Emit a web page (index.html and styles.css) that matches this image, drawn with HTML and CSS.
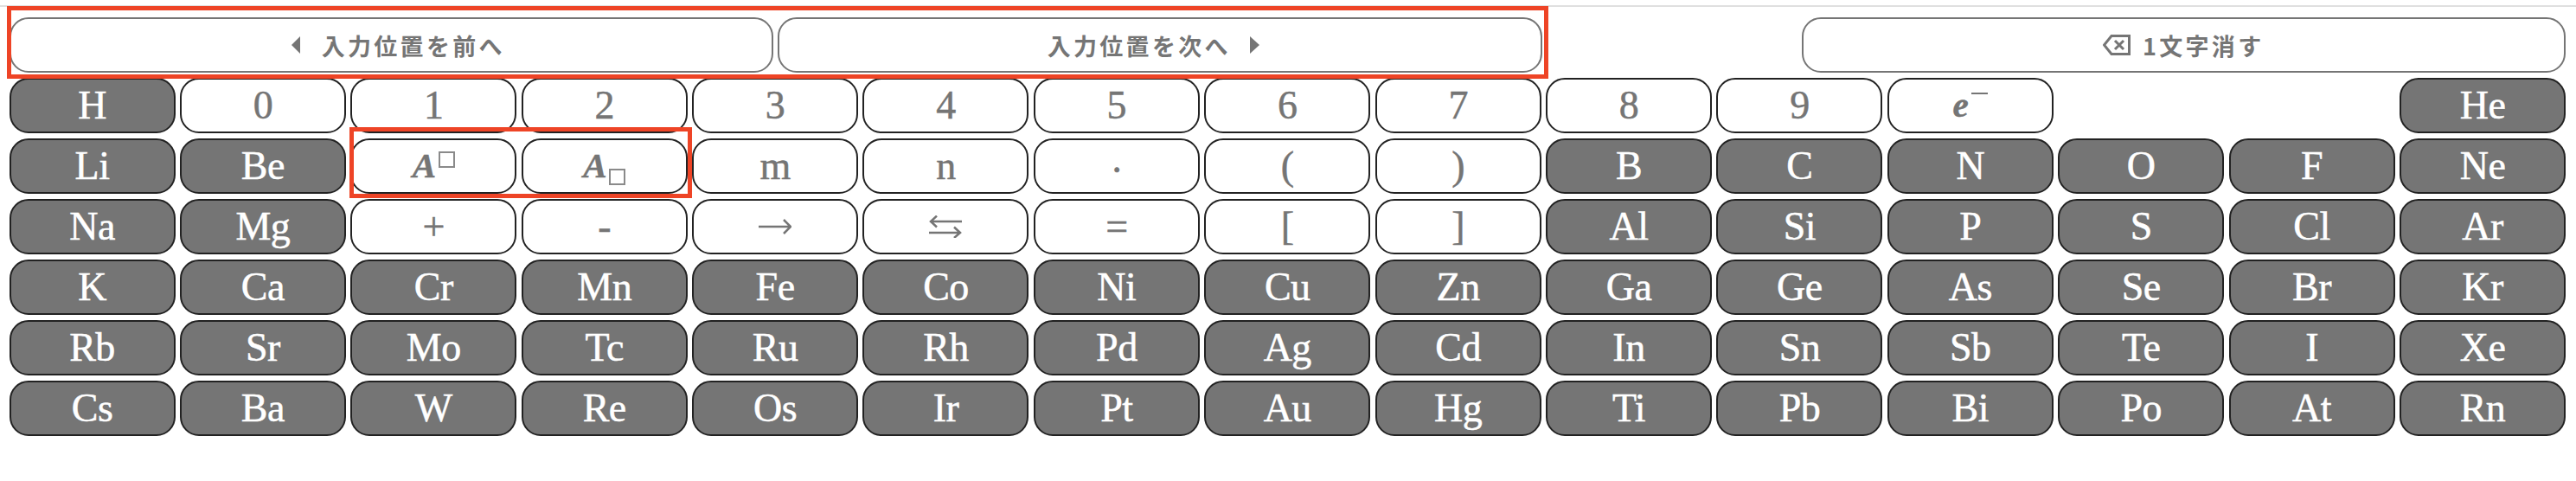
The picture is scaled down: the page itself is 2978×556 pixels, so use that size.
FILE: index.html
```html
<!DOCTYPE html>
<html lang="ja">
<head>
    <meta charset="UTF-8">
    <meta name="viewport" content="width=device-width, initial-scale=1.0">
    <title>化学式キーボード</title>
    <link rel="stylesheet" href="styles.css">
</head>
<body>
    <div class="keyboard">
        <div class="cursor-row">
            <button class="cursor-btn">
                <svg class="tri" width="51" height="20" viewBox="0 0 51 20"><path d="M26 0V20L16 10Z"/></svg>
                <span>入力位置を前へ</span>
            </button>
            <button class="cursor-btn">
                <span>入力位置を次へ</span>
                <svg class="tri" width="48" height="20" viewBox="0 0 48 20"><path d="M22 0V20L33 10Z"/></svg>
            </button>
            <button class="cursor-btn delete-btn">
                <svg class="back-icon" width="32" height="24" viewBox="0 0 32 24"><path d="M10 1.5H30.5V22.5H10L1.5 12Z M14 7L24 17 M24 7L14 17"/></svg>
                <span>1文字消す</span>
            </button>
        </div>
        <div class="keys">
            <button class="key elem">H</button>
            <button class="key">0</button>
            <button class="key">1</button>
            <button class="key">2</button>
            <button class="key">3</button>
            <button class="key">4</button>
            <button class="key">5</button>
            <button class="key">6</button>
            <button class="key">7</button>
            <button class="key">8</button>
            <button class="key">9</button>
            <button class="key"><i class="math">e</i><span class="minus"></span></button>
            <div></div>
            <div></div>
            <button class="key elem">He</button>

            <button class="key elem">Li</button>
            <button class="key elem">Be</button>
            <button class="key"><i class="math">A</i><span class="box box-sup"></span></button>
            <button class="key"><i class="math">A</i><span class="box box-sub"></span></button>
            <button class="key">m</button>
            <button class="key">n</button>
            <button class="key dot">·</button>
            <button class="key">(</button>
            <button class="key">)</button>
            <button class="key elem">B</button>
            <button class="key elem">C</button>
            <button class="key elem">N</button>
            <button class="key elem">O</button>
            <button class="key elem">F</button>
            <button class="key elem">Ne</button>

            <button class="key elem">Na</button>
            <button class="key elem">Mg</button>
            <button class="key">+</button>
            <button class="key">-</button>
            <button class="key" aria-label="→">
                <svg class="arrow" width="38" height="26" viewBox="0 0 38 26"><path d="M0 13H37 M29 5L37 13L29 21"/></svg>
            </button>
            <button class="key" aria-label="⇆">
                <svg class="arrow" width="38" height="26" viewBox="0 0 38 26"><path d="M38 7H2 M9 0.5L2 7L9 13.5 M0 20H36 M29 13.5L36 20L29 26"/></svg>
            </button>
            <button class="key">=</button>
            <button class="key">[</button>
            <button class="key">]</button>
            <button class="key elem">Al</button>
            <button class="key elem">Si</button>
            <button class="key elem">P</button>
            <button class="key elem">S</button>
            <button class="key elem">Cl</button>
            <button class="key elem">Ar</button>

            <button class="key elem">K</button>
            <button class="key elem">Ca</button>
            <button class="key elem">Cr</button>
            <button class="key elem">Mn</button>
            <button class="key elem">Fe</button>
            <button class="key elem">Co</button>
            <button class="key elem">Ni</button>
            <button class="key elem">Cu</button>
            <button class="key elem">Zn</button>
            <button class="key elem">Ga</button>
            <button class="key elem">Ge</button>
            <button class="key elem">As</button>
            <button class="key elem">Se</button>
            <button class="key elem">Br</button>
            <button class="key elem">Kr</button>

            <button class="key elem">Rb</button>
            <button class="key elem">Sr</button>
            <button class="key elem">Mo</button>
            <button class="key elem">Tc</button>
            <button class="key elem">Ru</button>
            <button class="key elem">Rh</button>
            <button class="key elem">Pd</button>
            <button class="key elem">Ag</button>
            <button class="key elem">Cd</button>
            <button class="key elem">In</button>
            <button class="key elem">Sn</button>
            <button class="key elem">Sb</button>
            <button class="key elem">Te</button>
            <button class="key elem">I</button>
            <button class="key elem">Xe</button>

            <button class="key elem">Cs</button>
            <button class="key elem">Ba</button>
            <button class="key elem">W</button>
            <button class="key elem">Re</button>
            <button class="key elem">Os</button>
            <button class="key elem">Ir</button>
            <button class="key elem">Pt</button>
            <button class="key elem">Au</button>
            <button class="key elem">Hg</button>
            <button class="key elem">Ti</button>
            <button class="key elem">Pb</button>
            <button class="key elem">Bi</button>
            <button class="key elem">Po</button>
            <button class="key elem">At</button>
            <button class="key elem">Rn</button>
        </div>
    </div>
    <!-- red annotation boxes drawn over the screenshot -->
    <div class="mark mark-cursor"></div>
    <div class="mark mark-script"></div>
</body>
</html>
```

FILE: styles.css
```css
body {
    margin: 0;
    padding: 0;
    background: #fff;
    overflow: hidden;
}

.keyboard {
    margin-top: 6px;
    border-top: 2px solid #e0e0e0;
    padding: 12px 12px 0 10.5px;
}

button {
    margin: 0;
    padding: 0;
    cursor: pointer;
}

.cursor-row {
    display: flex;
    gap: 5px;
    height: 64px;
    margin-bottom: 6px;
}

.cursor-btn {
    flex: 0 0 883.5px;
    display: flex;
    align-items: center;
    justify-content: center;
    background: #fff;
    border: 2px solid #757575;
    border-radius: 22px;
    color: #757575;
    font-family: "Noto Sans CJK JP", sans-serif;
    font-size: 27px;
    font-weight: 700;
    letter-spacing: 3.3px;
}

.delete-btn {
    margin-left: auto;
    gap: 14px;
}

.tri {
    fill: #757575;
}

.back-icon {
    fill: none;
    stroke: #757575;
    stroke-width: 3;
}

.keys {
    display: grid;
    grid-template-columns: repeat(15, 1fr);
    grid-auto-rows: 64px;
    gap: 6px 5.36px;
}

.key {
    display: flex;
    align-items: center;
    justify-content: center;
    padding-bottom: 2px;
    background: #fff;
    border: 2px solid #222;
    border-radius: 22px;
    color: #757575;
    font-family: "Liberation Serif", serif;
    font-size: 46px;
    letter-spacing: -0.5px;
    -webkit-text-stroke: 0.5px currentColor;
}

.elem {
    background: #757575;
    color: #fff;
}

.dot {
    padding: 8px 0 0;
}

.math {
    font-size: 41px;
    font-weight: bold;
}

.box {
    display: inline-block;
    box-sizing: border-box;
    width: 19px;
    height: 19px;
    margin-left: 3px;
    border: 2px solid #8a8a8a;
}

.box-sup {
    margin-bottom: 14px;
}

.box-sub {
    margin-top: 26px;
}

.minus {
    display: inline-block;
    width: 19px;
    height: 2px;
    margin: 0 0 26px 4px;
    background: #757575;
}

.arrow {
    margin-top: 2px;
    fill: none;
    stroke: #757575;
    stroke-width: 2.5;
}

.mark {
    position: absolute;
    box-sizing: border-box;
    border: 5px solid #ee4426;
}

.mark-cursor {
    left: 8px;
    top: 7px;
    width: 1782px;
    height: 84px;
}

.mark-script {
    left: 404px;
    top: 147px;
    width: 396px;
    height: 82px;
}
```
